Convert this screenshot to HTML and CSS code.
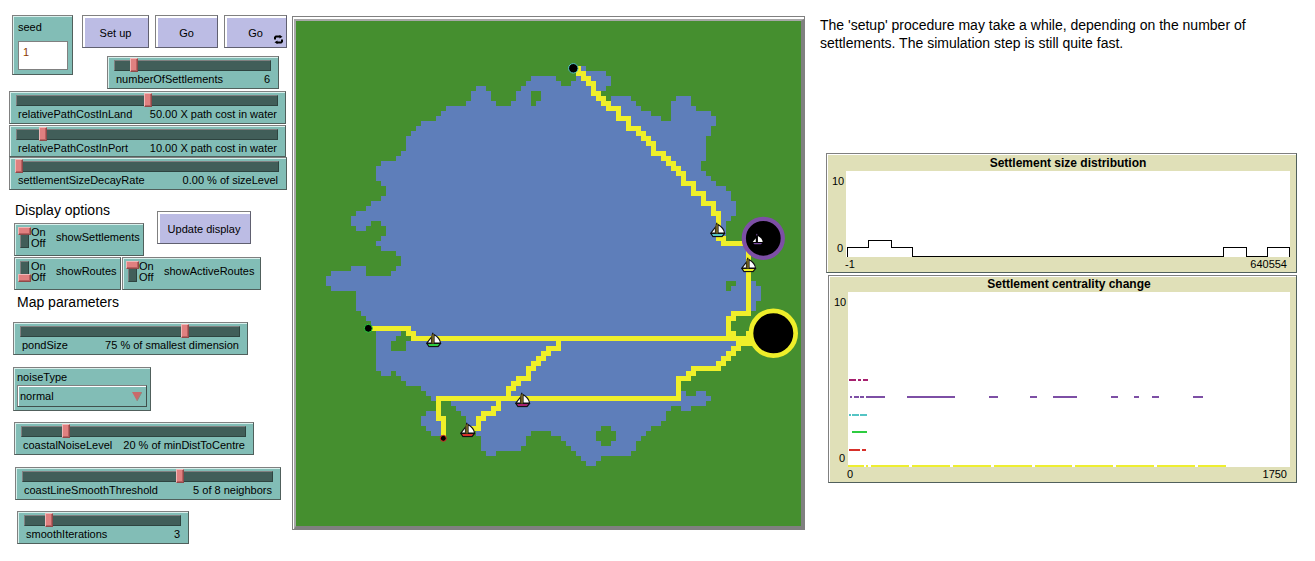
FILE: index.html
```html
<!DOCTYPE html>
<html lang="en">
<head>
    <meta charset="UTF-8">
    <meta name="viewport" content="width=device-width, initial-scale=1.0">
    <title>Settlements and routes</title>
    <link rel="stylesheet" href="styles.css">
</head>
<body>
    <div class="canvas">
        <!-- left column: inputs -->
        <div class="widget input-box seed-box">
            <span class="input-label">seed</span>
            <div class="input-value">1</div>
        </div>
        <button class="widget button setup-btn">Set up</button>
        <button class="widget button go-btn">Go</button>
        <button class="widget button go-forever-btn">Go
            <svg class="forever-icon" viewBox="0 0 9 9">
                <path d="M1 4.500V2.500L2 1.500H6.500M8 4.500V6.500L7 7.500H2.500" fill="none" stroke="#000" stroke-width="2"/>
                <path d="M5.500 0L8.500 1.700L5.500 3.400ZM3.500 5.600L.5 7.300L3.500 9Z" fill="#000"/>
            </svg>
        </button>

        <div class="widget slider settlements-slider">
            <div class="trough"><span class="knob" style="left:15px"></span></div>
            <div class="slider-text"><span>numberOfSettlements</span><span>6</span></div>
        </div>
        <div class="widget slider land-slider">
            <div class="trough"><span class="knob" style="left:127px"></span></div>
            <div class="slider-text"><span>relativePathCostInLand</span><span>50.00 X path cost in water</span></div>
        </div>
        <div class="widget slider port-slider">
            <div class="trough"><span class="knob" style="left:22px"></span></div>
            <div class="slider-text"><span>relativePathCostInPort</span><span>10.00 X path cost in water</span></div>
        </div>
        <div class="widget slider decay-slider">
            <div class="trough"><span class="knob" style="left:-2px"></span></div>
            <div class="slider-text"><span>settlementSizeDecayRate</span><span>0.00 % of sizeLevel</span></div>
        </div>

        <div class="note display-note">Display options</div>
        <button class="widget button update-btn">Update display</button>
        <div class="widget switch settlements-switch">
            <div class="switch-channel"><span class="switch-knob"></span></div>
            <div class="switch-states"><span>On</span><span>Off</span></div>
            <span class="switch-name">showSettlements</span>
        </div>
        <div class="widget switch routes-switch">
            <div class="switch-channel is-off"><span class="switch-knob"></span></div>
            <div class="switch-states"><span>On</span><span>Off</span></div>
            <span class="switch-name">showRoutes</span>
        </div>
        <div class="widget switch active-switch">
            <div class="switch-channel"><span class="switch-knob"></span></div>
            <div class="switch-states"><span>On</span><span>Off</span></div>
            <span class="switch-name">showActiveRoutes</span>
        </div>

        <div class="note map-note">Map parameters</div>
        <div class="widget slider pond-slider">
            <div class="trough"><span class="knob" style="left:160px"></span></div>
            <div class="slider-text"><span>pondSize</span><span>75 % of smallest dimension</span></div>
        </div>
        <div class="widget chooser noise-chooser">
            <span class="chooser-label">noiseType</span>
            <div class="chooser-box">
                <span>normal</span>
                <svg class="chooser-arrow" viewBox="0 0 10 9"><path d="M0 0H10L5 9Z" fill="#c96a6a"/><path d="M10 0L5 9" stroke="#8a8a80" fill="none"/></svg>
            </div>
        </div>
        <div class="widget slider noise-slider">
            <div class="trough"><span class="knob" style="left:40px"></span></div>
            <div class="slider-text"><span>coastalNoiseLevel</span><span>20 % of minDistToCentre</span></div>
        </div>
        <div class="widget slider threshold-slider">
            <div class="trough"><span class="knob" style="left:153px"></span></div>
            <div class="slider-text"><span>coastLineSmoothThreshold</span><span>5 of 8 neighbors</span></div>
        </div>
        <div class="widget slider iterations-slider">
            <div class="trough"><span class="knob" style="left:20px"></span></div>
            <div class="slider-text"><span>smoothIterations</span><span>3</span></div>
        </div>

        <!-- world view, one unit is one patch (5px) -->
        <div class="view">
            <svg class="world" viewBox="0 0 101 101">
                <defs>
                    <symbol id="boat" viewBox="0 0 16 15">
                        <path d="M1.500 11H15L12.500 14.200H3.500Z" fill="currentColor" stroke="#111" stroke-width="1.200"/>
                        <path d="M8.500 2Q14.500 5.500 15 10.500H8.500Z" fill="#fff" stroke="#111" stroke-width="1.200"/>
                        <path d="M6 4.500L1.500 10.500H6Z" fill="#fff" stroke="#111" stroke-width="1.200"/>
                        <path d="M6 1.500H8.500V11H6Z" fill="#6b5c22"/>
                        <path d="M7.200 0V2" stroke="#111" stroke-width="1.200"/>
                    </symbol>
                    <symbol id="boat-bare" viewBox="0 0 16 15">
                        <path d="M3 11.500H13.500L12 13H4.500Z" fill="currentColor"/>
                        <path d="M8.500 3.500Q13.500 6 14 10.500H8.500Z" fill="#fff"/>
                        <path d="M6 6L2.500 10.500H6Z" fill="#fff"/>
                        <path d="M7.200 1V3" stroke="#7d4fa5" stroke-width="1"/>
                    </symbol>
                </defs>
                <rect class="land" width="101" height="101"/>
                <polygon class="water" points="12,54 7,54 7,53 6,53 6,51 7,51 7,50 11,50 11,49 14,49 14,51 19,51 19,50 20,50 20,49 21,49 21,47 20,47 20,46 17,46 17,45 16,45 16,44 17,44 17,43 18,43 18,41 17,41 17,40 15,40 15,41 14,41 14,42 12,42 12,41 11,41 11,39 12,39 12,38 14,38 14,37 15,37 15,36 17,36 17,35 18,35 18,33 17,33 17,32 16,32 16,29 17,29 17,28 20,28 20,27 21,27 21,26 22,26 22,23 23,23 23,22 24,22 24,21 25,21 25,20 28,20 28,19 29,19 29,18 30,18 30,17 34,17 34,16 35,16 35,14 36,14 36,13 38,13 38,14 39,14 39,16 40,16 40,17 43,17 43,16 44,16 44,14 45,14 45,13 46,13 46,12 47,12 47,11 52,11 52,12 53,12 53,13 55,13 55,12 56,12 56,10 57,10 57,9 58,9 58,10 62,10 62,11 63,11 63,13 62,13 62,14 61,14 61,16 63,16 63,15 67,15 67,16 68,16 68,17 69,17 69,18 71,18 71,19 73,19 73,20 75,20 75,16 76,16 76,15 79,15 79,17 80,17 80,18 83,18 83,19 84,19 84,21 83,21 83,23 82,23 82,28 81,28 81,30 82,30 82,31 83,31 83,32 84,32 84,33 86,33 86,34 87,34 87,36 88,36 88,39 87,39 87,40 86,40 86,45 90,45 90,52 92,52 92,53 93,53 93,56 92,56 92,58 91,58 91,59 86,59 86,64 88,64 88,66 87,66 87,67 86,67 86,68 85,68 85,69 84,69 84,70 79,70 79,71 78,71 78,72 76,72 76,74 78,74 78,75 80,75 80,74 82,74 82,75 83,75 83,76 82,76 82,77 79,77 79,78 77,78 77,77 75,77 75,78 74,78 74,80 73,80 73,81 71,81 71,82 70,82 70,83 69,83 69,84 68,84 68,86 67,86 67,87 61,87 61,88 60,88 60,89 58,89 58,88 57,88 57,87 56,87 56,86 55,86 55,85 54,85 54,84 53,84 53,83 51,83 51,82 47,82 47,83 46,83 46,85 45,85 45,86 40,86 40,87 38,87 38,86 37,86 37,83 36,83 36,82 34,82 34,79 33,79 33,78 32,78 32,77 31,77 31,76 27,76 27,75 26,75 26,74 25,74 25,73 22,73 22,72 21,72 21,71 20,71 20,70 19,70 19,71 17,71 17,70 16,70 16,62 15,62 15,60 14,60 14,59 13,59 13,58 12,58"/>
                <polygon class="water" points="26,78 29,78 29,79 30,79 30,83 27,83 27,82 26,82 26,81 25,81 25,79 26,79"/>
                <polygon class="land" points="21,62 22,62 22,63 23,63 23,64 22,64 22,66 19,66 19,64 20,64 20,63 21,63"/>
                <polygon class="land" points="61,81 63,81 63,82 64,82 64,84 63,84 63,85 61,85 61,84 60,84 60,82 61,82"/>
                <polygon class="land" points="86,52 88,52 88,53 87,53 87,54 86,54"/>
                <polygon class="land" points="47,14 49,14 49,16 48,16 48,17 47,17"/>

                <g class="routes">
                    <path d="M56 9V10H57V11H58V12H59V14H60V15H61V16H62V17H64V19H66V21H68V22H69V23H70V24H71V26H73V27H74V28H75V29H76V30H77V32H79V34H81V36H83V38H84V43H85V44H90"/>
                    <path d="M90 45V58H87V59H86V62H87V63"/>
                    <path d="M15 61H22V62H23V63H90V62M88 64H91"/>
                    <path d="M88 64V65H87V66H86V67H85V68H84V69H79V70H78V71H76V75H28V79H29V82"/>
                    <path d="M52 63V65H50V66H49V67H48V68H47V69H46V71H44V72H43V73H42V75"/>
                    <path d="M40 75V77H39V78H37V79H36V81H35"/>
                </g>

                <circle class="town big-town" cx="95.460" cy="62.460" r="4.470"/>
                <circle class="town purple-town" cx="93.460" cy="43.460" r="3.900"/>
                <circle class="town teal-town" cx="55.460" cy="9.460" r=".95"/>
                <circle class="town green-town" cx="14.460" cy="61.460" r=".8"/>
                <circle class="town red-town" cx="29.460" cy="83.460" r=".6"/>

                <use href="#boat" class="boat-teal" x="82.700" y="40.300" width="3.200" height="3"/>
                <use href="#boat" class="boat-yellow" x="88.900" y="47.300" width="3.200" height="3"/>
                <use href="#boat-bare" class="boat-purple" x="90.900" y="42.400" width="2.800" height="2.600"/>
                <use href="#boat" class="boat-green" x="25.900" y="62.300" width="3.200" height="3"/>
                <use href="#boat" class="boat-magenta" x="43.700" y="74.300" width="3.200" height="3"/>
                <use href="#boat" class="boat-red" x="32.700" y="80.300" width="3.200" height="3"/>
            </svg>
        </div>

        <div class="note info-note">The 'setup' procedure may take a while, depending on the number of settlements. The simulation step is still quite fast.</div>

        <!-- plots -->
        <div class="widget plot size-plot">
            <div class="plot-title">Settlement size distribution</div>
            <div class="plot-body">
                <div class="plot-y"><span>10</span><span>0</span></div>
                <svg class="plot-area" viewBox="0 0 444 86">
                    <path class="histogram" d="M1 85.500V76.500H22.500V69.500H45V76.500H66.500V85.500H377.500V76.500H400V85.500H421.500V76.500H443.500V85.500"/>
                </svg>
            </div>
            <div class="plot-x"><span>-1</span><span>640554</span></div>
        </div>
        <div class="widget plot centrality-plot">
            <div class="plot-title">Settlement centrality change</div>
            <div class="plot-body">
                <div class="plot-y"><span>10</span><span>0</span></div>
                <svg class="plot-area" viewBox="0 0 443 175">
                    <path class="pen" stroke="#a6206e" d="M1 88H8M10 88H13M15 88H20"/>
                    <path class="pen" stroke="#7d4fa5" d="M2 105H4M6 105H11M12 105H16M18 105H37M59 105H107M141 105H150M182 105H189M205 105H230M264 105H271M287 105H292M305 105H312M346 105H356"/>
                    <path class="pen" stroke="#54c4c4" d="M1 123H3M4 123H11M12 123H19"/>
                    <path class="pen" stroke="#2dcc40" d="M4 140H19"/>
                    <path class="pen" stroke="#d7302a" d="M1 158H12M14 158H18"/>
                    <path class="pen" stroke="#eeee30" d="M0 174H16M18 174H20M23 174H61M64 174H102M105 174H143M146 174H184M187 174H225M228 174H266M269 174H307M310 174H348M351 174H379"/>
                </svg>
            </div>
            <div class="plot-x"><span>0</span><span>1750</span></div>
        </div>
    </div>
</body>
</html>
```

FILE: styles.css
```css
body {
    margin: 0;
    background-color: #fff;
    font-family: "Liberation Sans", sans-serif;
    font-size: 11px;
    color: #000;
}
.canvas {
    position: relative;
    width: 1315px;
    height: 561px;
    overflow: hidden;
}

/* every netlogo widget sits at its own spot on the interface */
.widget, .note, .view {
    position: absolute;
    box-sizing: border-box;
}
.widget {
    border: 1px solid #808080;
    border-right-color: #50605c;
    border-bottom-color: #50605c;
}
.note {
    font-size: 14px;
    line-height: 18px;
}

.seed-box { left: 12px; top: 15px; width: 61px; height: 60px; }
.setup-btn { left: 82px; top: 15px; width: 67px; height: 33px; }
.go-btn { left: 155px; top: 15px; width: 63px; height: 33px; }
.go-forever-btn { left: 224px; top: 15px; width: 63px; height: 33px; }
.settlements-slider { left: 107px; top: 56px; width: 172px; height: 33px; }
.land-slider { left: 9px; top: 91px; width: 277px; height: 33px; }
.port-slider { left: 9px; top: 125px; width: 277px; height: 32px; }
.decay-slider { left: 9px; top: 157px; width: 278px; height: 33px; }
.display-note { left: 15px; top: 201px; }
.update-btn { left: 157px; top: 211px; width: 94px; height: 33px; }
.settlements-switch { left: 14px; top: 223px; width: 130px; height: 33px; }
.routes-switch { left: 14px; top: 257px; width: 107px; height: 33px; }
.active-switch { left: 122px; top: 257px; width: 139px; height: 33px; }
.map-note { left: 17px; top: 293px; }
.pond-slider { left: 13px; top: 322px; width: 235px; height: 33px; }
.noise-chooser { left: 13px; top: 367px; width: 138px; height: 44px; }
.noise-slider { left: 14px; top: 422px; width: 240px; height: 33px; }
.threshold-slider { left: 15px; top: 467px; width: 266px; height: 33px; }
.iterations-slider { left: 17px; top: 511px; width: 172px; height: 33px; }
.info-note { left: 820px; top: 16px; width: 432px; }
.size-plot { left: 826px; top: 153px; width: 471px; height: 120px; }
.centrality-plot { left: 828px; top: 275px; width: 469px; height: 208px; padding-right: 5px; }
.centrality-plot .plot-title { height: 16px; line-height: 16px; }

/* input box */
.input-box {
    background-color: #82bdb6;
    box-shadow: inset 1px 1px 0 #d8f0ec;
    padding: 3px 4px 4px 5px;
}
.input-label {
    display: block;
    height: 21px;
    line-height: 17px;
}
.input-value {
    height: 29px;
    box-sizing: border-box;
    margin-top: 1px;
    border: 1px solid #808080;
    background-color: #fff;
    color: #8c3a00;
    padding: 2px 0 0 4px;
    line-height: 17px;
}

/* buttons */
.button {
    padding: 3px 0 0;
    font: inherit;
    color: #000;
    background-color: #bcbce4;
    box-shadow: inset 2px 2px 0 #fff;
    border-right-color: #606070;
    border-bottom-color: #606070;
}
.forever-icon {
    position: absolute;
    right: 3px;
    bottom: 3px;
    width: 9px;
    height: 9px;
}

/* sliders */
.slider {
    display: flex;
    flex-direction: column;
    background-color: #82bdb6;
    box-shadow: inset 1px 1px 0 #d8f0ec;
    padding: 3px 7px 0 6px;
}
.trough {
    position: relative;
    height: 11px;
    flex: none;
    background-color: #415e59;
    border: 1px solid #808080;
    border-right-color: #2e4440;
    border-bottom-color: #2e4440;
    box-sizing: border-box;
}
.knob {
    position: absolute;
    top: -3px;
    width: 8px;
    height: 14px;
    box-sizing: border-box;
    background-color: #e08080;
    border: 1px solid #8e4a4a;
    border-top-color: #f0b8b8;
    border-left-color: #f0b8b8;
    box-shadow: inset -1px -1px 0 #b86060;
}
.slider-text {
    display: flex;
    justify-content: space-between;
    padding: 0 1px 0 2px;
    line-height: 16px;
    white-space: nowrap;
}

/* switches */
.switch {
    display: flex;
    align-items: center;
    background-color: #82bdb6;
    box-shadow: inset 1px 1px 0 #d8f0ec;
    padding: 0 0 5px 5px;
}
.switch-channel {
    position: relative;
    flex: none;
    width: 9px;
    height: 21px;
    margin-top: 1px;
    box-sizing: border-box;
    background-color: #415e59;
    border: 1px solid #808080;
    border-right-color: #2e4440;
    border-bottom-color: #2e4440;
}
.switch-knob {
    position: absolute;
    left: -3px;
    top: -1px;
    width: 13px;
    height: 8px;
    box-sizing: border-box;
    background-color: #e08080;
    border: 1px solid #8e4a4a;
    border-top-color: #f0b8b8;
    border-left-color: #f0b8b8;
    box-shadow: inset -1px -1px 0 #b86060;
}
.switch-channel.is-off .switch-knob {
    top: auto;
    bottom: -1px;
}
.switch-states {
    display: flex;
    flex: none;
    flex-direction: column;
    width: 25px;
    margin: 2px 0 0 2px;
    line-height: 11px;
}
.switch-name {
    white-space: nowrap;
}

/* chooser */
.chooser {
    background-color: #82bdb6;
    box-shadow: inset 1px 1px 0 #d8f0ec;
    padding: 3px 3px 3px 3px;
}
.chooser-label {
    display: block;
    height: 14px;
    line-height: 13px;
}
.chooser-box {
    display: flex;
    align-items: center;
    justify-content: space-between;
    height: 22px;
    box-sizing: border-box;
    border: 1px solid #808080;
    border-right-color: #40504c;
    border-bottom-color: #40504c;
    box-shadow: inset 1px 1px 0 #fff;
    padding: 0 4px 1px 2px;
}
.chooser-arrow {
    width: 10px;
    height: 9px;
    margin-top: 1px;
}

/* view */
.view {
    left: 292px;
    top: 16px;
    width: 513px;
    height: 514px;
    border: 1px solid #808080;
    padding: 2px 1px 0 1px;
}
.world {
    display: block;
    width: 505px;
    height: 505px;
    box-sizing: content-box;
    border-style: solid;
    border-width: 2px 3px 3px 2px;
    border-color: #a8a8a8 #808080 #808080 #a8a8a8;
}
.land { fill: #458f2f; shape-rendering: crispEdges; }
.water { fill: #5e7eba; shape-rendering: crispEdges; }
.routes path {
    fill: none;
    stroke: #efef2a;
    stroke-width: 1;
    stroke-linecap: square;
    transform: translate(.5px, .5px);
    shape-rendering: crispEdges;
}
.town { fill: #000; }
.big-town { stroke: #efef2a; stroke-width: .94; }
.purple-town { stroke: #7d4fa5; stroke-width: .85; }
.teal-town { stroke: #54c4c4; stroke-width: .2; }
.green-town { stroke: #2dcc40; stroke-width: .2; }
.red-town { stroke: #d7302a; stroke-width: .2; }
.boat-teal { color: #54c4c4; }
.boat-yellow { color: #efef2a; }
.boat-purple { color: #7d4fa5; }
.boat-green { color: #2dcc40; }
.boat-magenta { color: #a6206e; }
.boat-red { color: #d7302a; }

/* plots */
.plot {
    display: flex;
    flex-direction: column;
    background-color: #e0e0b8;
    box-shadow: inset 1px 1px 0 #fff;
    padding: 0 6px 0 5px;
}
.plot-title {
    flex: none;
    text-align: center;
    font-size: 12px;
    font-weight: bold;
    line-height: 19px;
    height: 17px;
    padding-left: 14px;
}
.plot-body {
    display: flex;
    flex: 1;
    min-height: 0;
}
.plot-y {
    width: 14px;
    box-sizing: border-box;
    flex: none;
    display: flex;
    flex-direction: column;
    justify-content: space-between;
    text-align: right;
    padding: 2px 3px 1px 0;
    line-height: 16px;
}
.plot-area {
    background-color: #fff;
    flex: 1;
    min-width: 0;
    display: block;
}
.histogram {
    fill: none;
    stroke: #000;
    stroke-width: 1;
    shape-rendering: crispEdges;
}
.pen {
    fill: none;
    stroke-width: 2;
    shape-rendering: crispEdges;
}
.plot-x {
    flex: none;
    display: flex;
    justify-content: space-between;
    height: 15px;
    line-height: 14px;
    padding: 0 3px 0 13px;
}
```
